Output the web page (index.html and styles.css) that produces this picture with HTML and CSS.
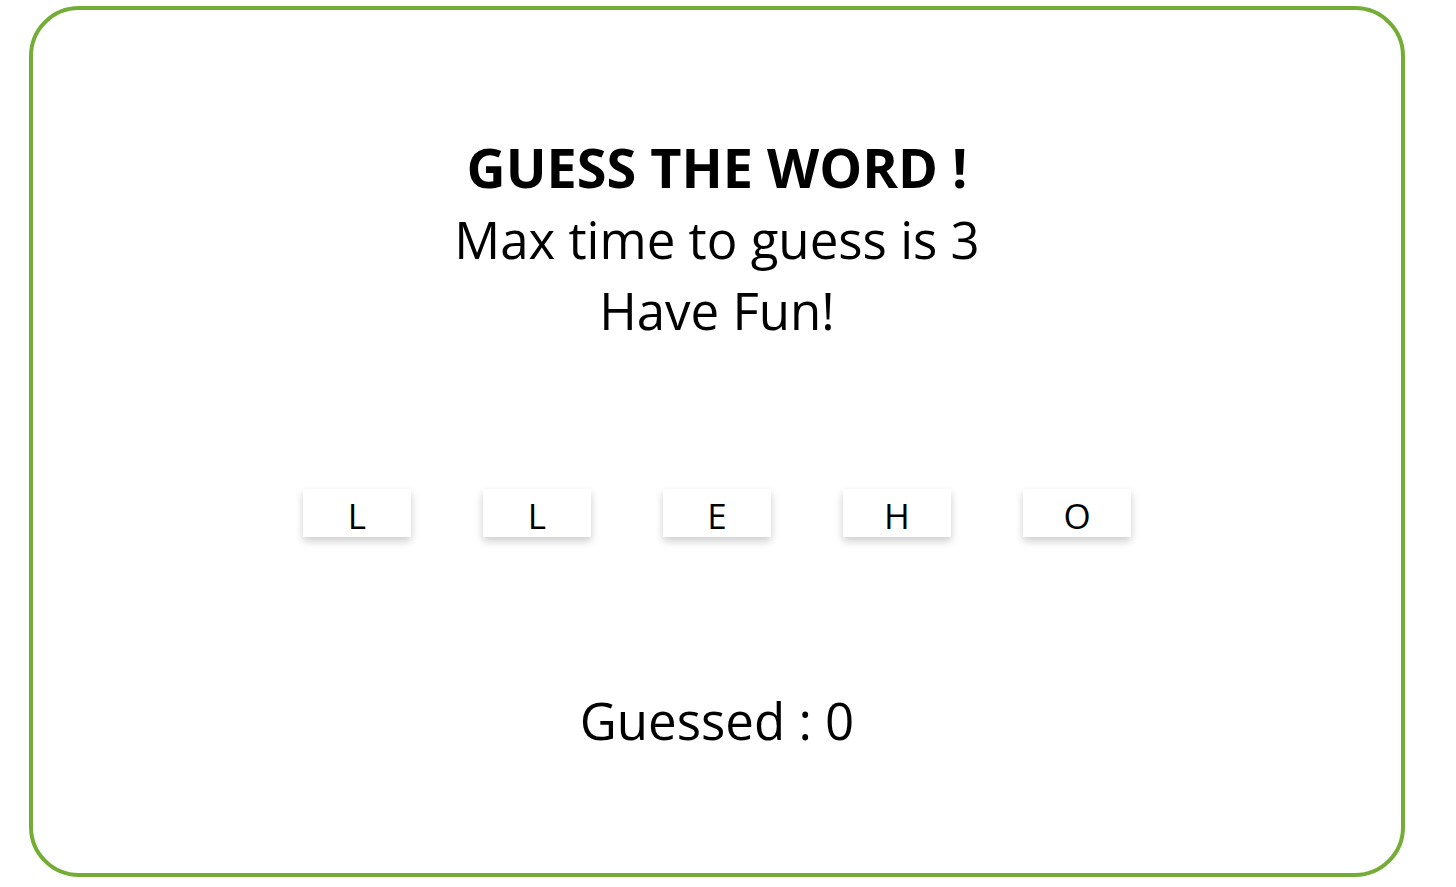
FILE: index.html
```html
<!DOCTYPE html>
<html lang="en">
<head>
<meta charset="utf-8">
<title>Guess the word</title>
<link rel="stylesheet" href="styles.css">
</head>
<body>
<main class="card">
  <header class="intro">
    <h1 class="title">GUESS THE WORD !</h1>
    <p class="line">Max time to guess is 3</p>
    <p class="line">Have Fun!</p>
  </header>
  <div class="tiles">
    <div class="tile">L</div>
    <div class="tile">L</div>
    <div class="tile">E</div>
    <div class="tile">H</div>
    <div class="tile">O</div>
  </div>
  <p class="score">Guessed : 0</p>
</main>
</body>
</html>
```

FILE: styles.css
```css
html, body {
  margin: 0;
  padding: 0;
  background: #ffffff;
}

body {
  font-family: "Open Sans", "Noto Sans", sans-serif;
  color: #000000;
}

.card {
  box-sizing: border-box;
  margin: 6px 0 0 29px;
  width: 1376px;
  height: 871px;
  border: 4px solid #74ad36;
  border-radius: 50px;
  display: flex;
  flex-direction: column;
  align-items: center;
  padding-top: 120px;
}

.intro {
  display: flex;
  flex-direction: column;
  align-items: center;
}

.title {
  margin: 0;
  font-size: 54px;
  line-height: 74px;
  font-weight: 700;
}

.line {
  margin: 0;
  font-size: 51px;
  line-height: 71px;
  font-weight: 400;
}

.tiles {
  display: flex;
  gap: 72px;
  margin-top: 143px;
}

.tile {
  box-sizing: border-box;
  width: 108px;
  height: 48px;
  padding-top: 5px;
  background: #ffffff;
  box-shadow: 0 4px 8px rgba(0, 0, 0, 0.2);
  text-align: center;
  font-size: 35px;
  line-height: 43px;
}

.score {
  margin: 147px 0 0;
  font-size: 51px;
  line-height: 72px;
}
```
